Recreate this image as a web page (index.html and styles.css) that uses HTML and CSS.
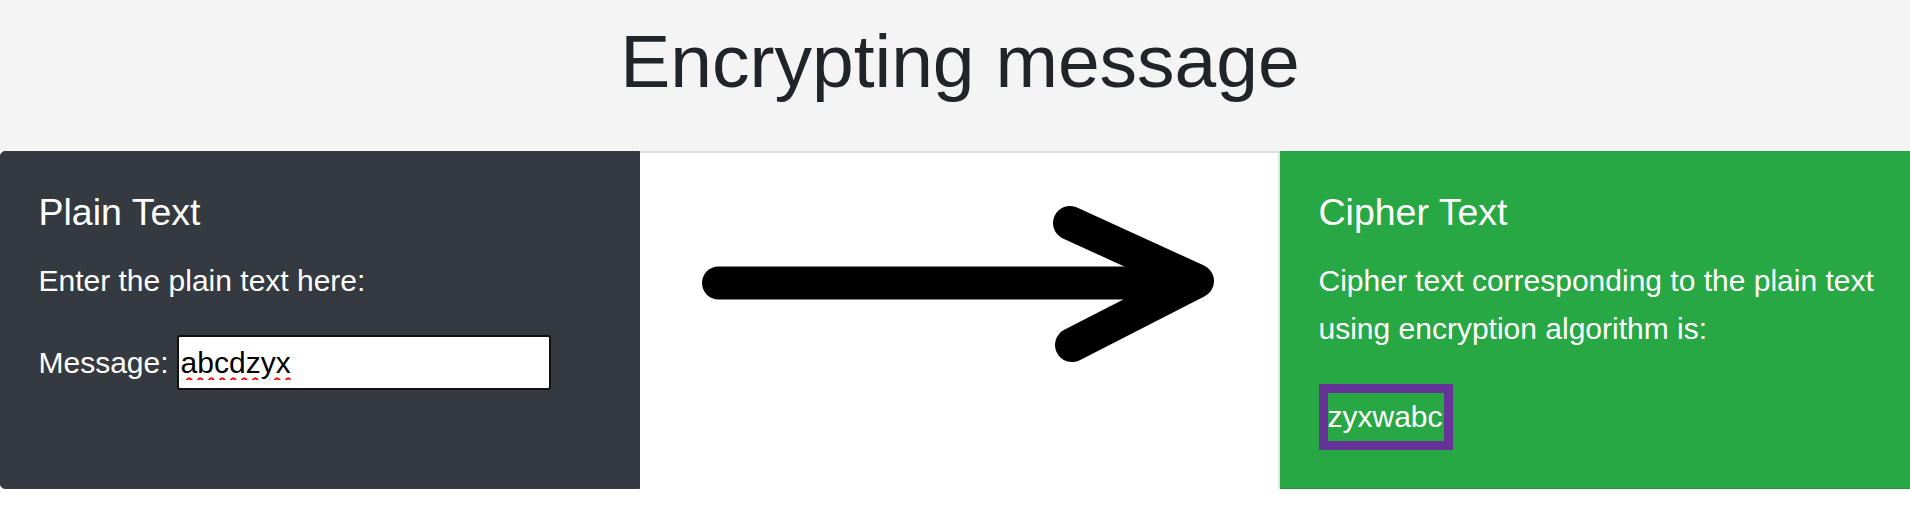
FILE: index.html
```html
<!DOCTYPE html>
<html lang="en">
<head>
<meta charset="utf-8">
<title>Encrypting message</title>
<link rel="stylesheet" href="styles.css">
</head>
<body>
<div class="page">
  <header class="hero">
    <h1 class="hero-title">Encrypting message</h1>
  </header>
  <main class="card-row">
    <section class="card card-dark">
      <div class="card-body">
        <h5 class="card-title">Plain Text</h5>
        <p class="card-text">Enter the plain text here:</p>
        <div class="form-row">
          <label class="form-label" for="msg">Message:</label>
          <input class="form-input" id="msg" type="text" value="abcdzyx">
        </div>
      </div>
    </section>
    <section class="card card-plain">
      <svg class="arrow" width="638" height="260" viewBox="0 0 638 260" aria-hidden="true">
        <path d="M78.5 131 H520" fill="none" stroke="#000" stroke-width="33" stroke-linecap="round"/>
        <path d="M430 71 L557 129 L432 193" fill="none" stroke="#000" stroke-width="34" stroke-linecap="round" stroke-linejoin="round"/>
      </svg>
    </section>
    <section class="card card-green">
      <div class="card-body">
        <h5 class="card-title">Cipher Text</h5>
        <p class="card-text">Cipher text corresponding to the plain text using encryption algorithm is:</p>
        <div class="cipher-box">zyxwabc</div>
      </div>
    </section>
  </main>
</div>
</body>
</html>
```
FILE: styles.css
```css
html, body {
  margin: 0;
  padding: 0;
  overflow: hidden;
  background: #fff;
}

.page {
  width: 1920px;
  font-family: "Liberation Sans", Arial, sans-serif;
  color: #212529;
}

.hero {
  background: #f4f4f4;
  padding: 16px 0 45px;
}

.hero-title {
  margin: 0;
  text-align: center;
  font-size: 75px;
  line-height: 90px;
  font-weight: 300;
  color: #212529;
}

.card-row {
  display: grid;
  grid-template-columns: 640px 640px 640px;
  align-items: stretch;
}

.card {
  box-sizing: border-box;
  border: 1px solid rgba(0, 0, 0, 0.125);
}

.card-dark {
  background: #343a40;
  border-color: #343a40;
  border-radius: 5px 0 0 5px;
  color: #fff;
}

.card-green {
  background: #28a745;
  border-color: #28a745;
  border-bottom-color: #24963e;
  color: #fff;
}

.card-plain {
  background: #fff;
  border-left: none;
  border-right: 2px solid #e2e2e2;
  border-top: 2px solid #dedede;
  margin-bottom: -60px;
}

.arrow {
  display: block;
  margin-top: -1px;
}

.card-body {
  padding: 37.5px;
}

.card-title {
  margin: 0 0 22.5px;
  font-size: 37.5px;
  line-height: 45px;
  font-weight: 500;
}

.card-text {
  margin: 0 0 30px;
  font-size: 30px;
  line-height: 48px;
}

.card-green .card-text {
  margin-bottom: 31px;
}

.form-row {
  display: flex;
  align-items: baseline;
  gap: 8px;
  font-size: 30px;
}

.form-label {
  line-height: 48px;
}

.form-input {
  box-sizing: border-box;
  width: 374px;
  height: 55px;
  padding: 0 2px;
  border: 2px solid #111;
  border-radius: 3px;
  background: #fff;
  color: #000;
  font: inherit;
  font-size: 30px;
  text-decoration: underline wavy #ff0000;
  text-decoration-thickness: 1.5px;
  text-underline-offset: 4px;
  outline: none;
}

.cipher-box {
  display: inline-block;
  border: 9px solid #663399;
  font-size: 30px;
  line-height: 48px;
  padding: 0 1px 0 0;
}
```
